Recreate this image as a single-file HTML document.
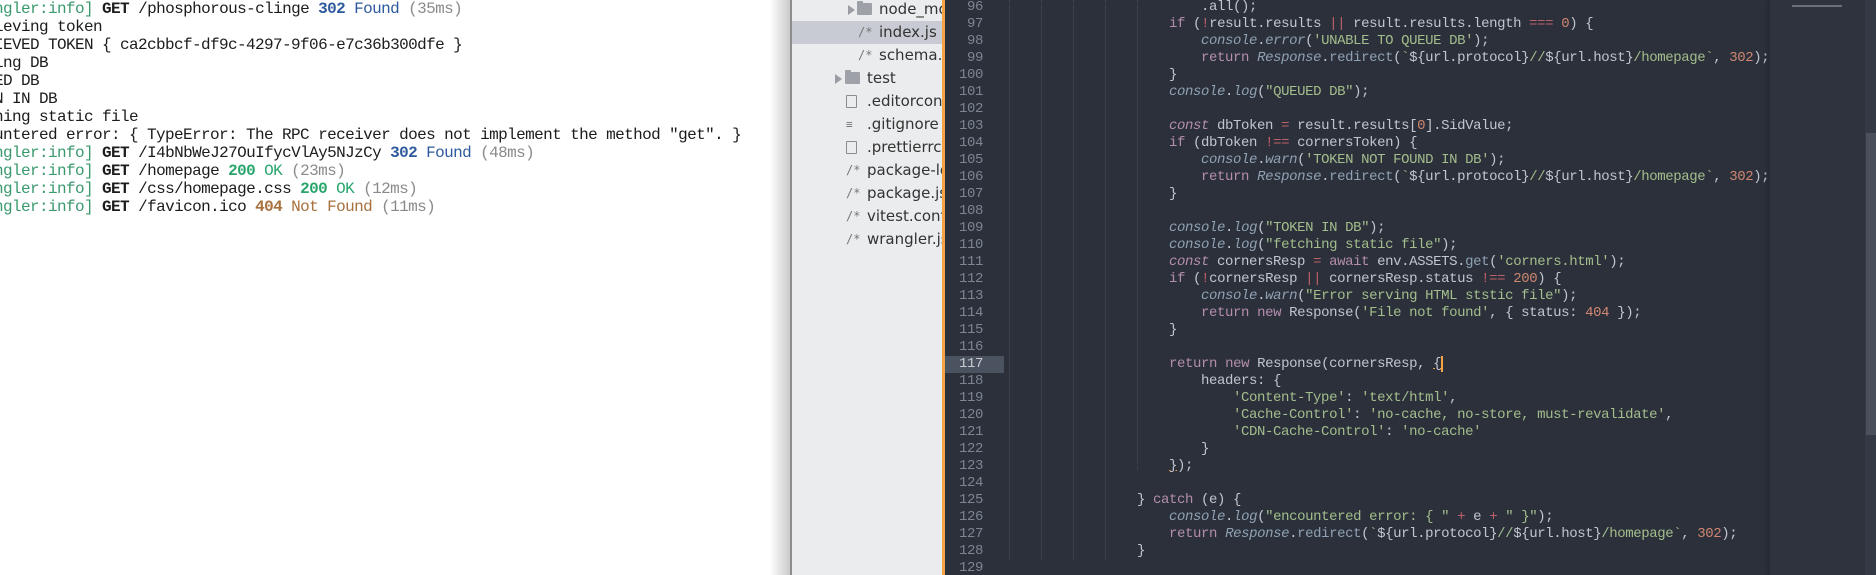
<!DOCTYPE html>
<html><head><meta charset="utf-8">
<style>
*{margin:0;padding:0;box-sizing:border-box}
html,body{width:1876px;height:575px;overflow:hidden;background:#fff}
#term{position:absolute;left:0;top:0;width:792px;height:575px;background:#fff;overflow:hidden}
#term .shadow{position:absolute;left:770px;top:0;width:21px;height:575px;background:linear-gradient(to right,rgba(0,0,0,0),rgba(0,0,0,0.22))}
#term .edge{position:absolute;left:790px;top:0;width:2px;height:575px;background:#8d8d8d}
#term pre{position:absolute;left:-42px;top:0;font:16px/18px "Liberation Mono",monospace;letter-spacing:-0.6px;color:#1c1c1c;white-space:pre}
.g{color:#3a9a6e}.b{font-weight:bold}.bl{color:#2d5a9c}.gr{color:#8a8a8a}.ok{color:#27a56b}.br{color:#a8703c}
#side{position:absolute;left:792px;top:0;width:150px;height:575px;background:#ebecee;overflow:hidden;font:15px "DejaVu Sans","Liberation Sans",sans-serif;color:#333}
.row{position:absolute;left:0;width:150px;height:23px;line-height:23px;white-space:nowrap}
.sel{background:#c8cbd3}
.row .t{position:absolute}
.arr{position:absolute;top:7px;width:0;height:0;border-left:7px solid #9a9da3;border-top:5px solid transparent;border-bottom:5px solid transparent}
.fold{position:absolute;top:5px;width:15px;height:12px;background:#9ea1a7;border-radius:1px}
.fold:before{content:"";position:absolute;left:0;top:-2px;width:6px;height:3px;background:#9ea1a7;border-radius:1px 1px 0 0}
.ic{position:absolute;color:#777;font-size:12px;font-family:"DejaVu Sans Mono",monospace}
.doc{position:absolute;top:5px;width:11px;height:13px;border:1.5px solid #8a8d93;border-radius:1px}
#bord{position:absolute;left:942px;top:0;width:3px;height:575px;background:#f5a445}
#ed{position:absolute;left:945px;top:0;width:931px;height:575px;background:#2b303b;overflow:hidden}
#mini{position:absolute;left:825px;top:0;width:96px;height:575px;background:#2e333e;box-shadow:-3px 0 4px rgba(0,0,0,0.15)}
#sb{position:absolute;left:920px;top:0;width:11px;height:575px;background:#343a45}
#thumb{position:absolute;left:921px;top:133px;width:10px;height:302px;background:#4a515c}
.hl{position:absolute;left:0;top:356px;width:59px;height:17px;background:#4a535f}
.ln{position:absolute;left:0;width:38px;text-align:right;font:14px/17px "Liberation Mono",monospace;letter-spacing:-0.4px;color:#7c8590}
.guide{position:absolute;top:0;width:0;height:560px;border-left:1px dotted #454b57}
#code{position:absolute;left:64px;top:-1px;font:14px/17px "Liberation Mono",monospace;letter-spacing:-0.4px;color:#c0c5ce;white-space:pre}
.k{color:#b48ead}.c{color:#8fa1b3;font-style:italic}.f{color:#8fa1b3}.s{color:#a3be8c}.n{color:#d08770}.o{color:#bf616a}
</style></head><body>
<div id="term">
<pre><span class="g">[wrangler:info]</span> <span class="b">GET</span> /phosphorous-clinge <span class="b bl">302</span> <span class="bl">Found</span> <span class="gr">(35ms)</span>
Retrieving token
RETRIEVED TOKEN { ca2cbbcf-df9c-4297-9f06-e7c36b300dfe }
Queuing DB
QUEUED DB
TOKEN IN DB
fetching static file
encountered error: { TypeError: The RPC receiver does not implement the method "get". }
<span class="g">[wrangler:info]</span> <span class="b">GET</span> /I4bNbWeJ27OuIfycVlAy5NJzCy <span class="b bl">302</span> <span class="bl">Found</span> <span class="gr">(48ms)</span>
<span class="g">[wrangler:info]</span> <span class="b">GET</span> /homepage <span class="b ok">200</span> <span class="ok">OK</span> <span class="gr">(23ms)</span>
<span class="g">[wrangler:info]</span> <span class="b">GET</span> /css/homepage.css <span class="b ok">200</span> <span class="ok">OK</span> <span class="gr">(12ms)</span>
<span class="g">[wrangler:info]</span> <span class="b">GET</span> /favicon.ico <span class="b br">404</span> <span class="br">Not Found</span> <span class="gr">(11ms)</span></pre>
<div class="shadow"></div><div class="edge"></div>
</div>
<div id="side">
<div class="row" style="top:-2px"><span class="arr" style="left:56px"></span><span class="fold" style="left:65px"></span><span class="t" style="left:87px">node_modules</span></div>
<div class="row sel" style="top:21px"><span class="ic" style="left:66px">/*</span><span class="t" style="left:87px">index.js</span></div>
<div class="row" style="top:44px"><span class="ic" style="left:66px">/*</span><span class="t" style="left:87px">schema.sql</span></div>
<div class="row" style="top:67px"><span class="arr" style="left:43px"></span><span class="fold" style="left:53px"></span><span class="t" style="left:75px">test</span></div>
<div class="row" style="top:90px"><span class="doc" style="left:54px"></span><span class="t" style="left:75px">.editorconfig</span></div>
<div class="row" style="top:113px"><span class="ic" style="left:54px;font-size:11px">&#8801;</span><span class="t" style="left:75px">.gitignore</span></div>
<div class="row" style="top:136px"><span class="doc" style="left:54px"></span><span class="t" style="left:75px">.prettierrc</span></div>
<div class="row" style="top:159px"><span class="ic" style="left:54px">/*</span><span class="t" style="left:75px">package-lock.json</span></div>
<div class="row" style="top:182px"><span class="ic" style="left:54px">/*</span><span class="t" style="left:75px">package.json</span></div>
<div class="row" style="top:205px"><span class="ic" style="left:54px">/*</span><span class="t" style="left:75px">vitest.config.js</span></div>
<div class="row" style="top:228px"><span class="ic" style="left:54px">/*</span><span class="t" style="left:75px">wrangler.jsonc</span></div>
</div>
<div id="bord"></div>
<div id="ed">
<div class="hl"></div>
<pre class="ln" style="top:-1px">96
97
98
99
100
101
102
103
104
105
106
107
108
109
110
111
112
113
114
115
116
<span style="color:#c8ccd2">117</span>
118
119
120
121
122
123
124
125
126
127
128
129</pre>
<div class="guide" style="left:64px"></div><div class="guide" style="left:96px"></div><div class="guide" style="left:128px"></div><div class="guide" style="left:160px"></div><div class="guide" style="left:192px;height:470px"></div>
<pre id="code">                        .all();
                    <span class="k">if</span> (<span class="o">!</span>result.results <span class="o">||</span> result.results.length <span class="o">===</span> <span class="n">0</span>) {
                        <span class="c">console</span>.<span class="c">error</span>(<span class="s">'UNABLE TO QUEUE DB'</span>);
                        <span class="k">return</span> <span class="c">Response</span>.<span class="f">redirect</span>(<span class="s">`</span>${url.protocol}<span class="s">//</span>${url.host}<span class="s">/homepage`</span>, <span class="n">302</span>);
                    }
                    <span class="c">console</span>.<span class="c">log</span>(<span class="s">"QUEUED DB"</span>);

                    <span class="k" style="font-style:italic">const</span> dbToken <span class="o">=</span> result.results[<span class="n">0</span>].SidValue;
                    <span class="k">if</span> (dbToken <span class="o">!==</span> cornersToken) {
                        <span class="c">console</span>.<span class="c">warn</span>(<span class="s">'TOKEN NOT FOUND IN DB'</span>);
                        <span class="k">return</span> <span class="c">Response</span>.<span class="f">redirect</span>(<span class="s">`</span>${url.protocol}<span class="s">//</span>${url.host}<span class="s">/homepage`</span>, <span class="n">302</span>);
                    }

                    <span class="c">console</span>.<span class="c">log</span>(<span class="s">"TOKEN IN DB"</span>);
                    <span class="c">console</span>.<span class="c">log</span>(<span class="s">"fetching static file"</span>);
                    <span class="k" style="font-style:italic">const</span> cornersResp <span class="o">=</span> <span class="k">await</span> env.ASSETS.<span class="f">get</span>(<span class="s">'corners.html'</span>);
                    <span class="k">if</span> (<span class="o">!</span>cornersResp <span class="o">||</span> cornersResp.status <span class="o">!==</span> <span class="n">200</span>) {
                        <span class="c">console</span>.<span class="c">warn</span>(<span class="s">"Error serving HTML ststic file"</span>);
                        <span class="k">return</span> <span class="k">new</span> Response(<span class="s">'File not found'</span>, { status: <span class="n">404</span> });
                    }

                    <span class="k">return</span> <span class="k">new</span> Response(cornersResp, <span style="text-decoration:underline;text-decoration-color:#f5a445">{</span><span style="border-left:2px solid #f5a445"></span>
                        headers: {
                            <span class="s">'Content-Type'</span>: <span class="s">'text/html'</span>,
                            <span class="s">'Cache-Control'</span>: <span class="s">'no-cache, no-store, must-revalidate'</span>,
                            <span class="s">'CDN-Cache-Control'</span>: <span class="s">'no-cache'</span>
                        }
                    <span style="text-decoration:underline;text-decoration-color:#f5a445">}</span>);

                } <span class="k">catch</span> (e) {
                    <span class="c">console</span>.<span class="c">log</span>(<span class="s">"encountered error: { "</span> <span class="o">+</span> e <span class="o">+</span> <span class="s">" }"</span>);
                    <span class="k">return</span> <span class="c">Response</span>.<span class="f">redirect</span>(<span class="s">`</span>${url.protocol}<span class="s">//</span>${url.host}<span class="s">/homepage`</span>, <span class="n">302</span>);
                }
</pre>
<div id="mini"><div style="position:absolute;left:22px;top:5px;width:50px;height:2px;background:#6b6f78"></div></div>
<div id="sb"></div><div id="thumb"></div>
</div>
</body></html>
